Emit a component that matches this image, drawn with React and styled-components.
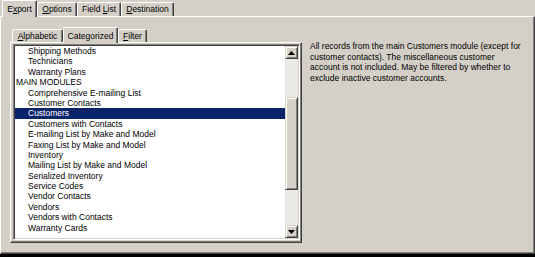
import React from "react";
import styled, { createGlobalStyle } from "styled-components";

const GlobalStyle = createGlobalStyle`
  html, body { margin: 0; padding: 0; background: #d4d0c8; }
`;

const face = "#d4d0c8";
const shadow = "#808080";
const dark = "#404040";

const items = [
  { label: "Shipping Methods" },
  { label: "Technicians" },
  { label: "Warranty Plans" },
  { label: "MAIN MODULES", header: true },
  { label: "Comprehensive E-mailing List" },
  { label: "Customer Contacts" },
  { label: "Customers", selected: true },
  { label: "Customers with Contacts" },
  { label: "E-mailing List by Make and Model" },
  { label: "Faxing List by Make and Model" },
  { label: "Inventory" },
  { label: "Mailing List by Make and Model" },
  { label: "Serialized Inventory" },
  { label: "Service Codes" },
  { label: "Vendor Contacts" },
  { label: "Vendors" },
  { label: "Vendors with Contacts" },
  { label: "Warranty Cards" },
];

const App = () => {
  return (
    <>
      <GlobalStyle />
      <Window>
        <TabStrip $h={16} $pl={2}>
          <Tab $w={35} $h={14} $active>
            E<u>x</u>port
          </Tab>
          <Tab $w={40} $h={14}>
            <u>O</u>ptions
          </Tab>
          <Tab $w={44} $h={14}>
            Field <u>L</u>ist
          </Tab>
          <Tab $w={53} $h={14}>
            <u>D</u>estination
          </Tab>
        </TabStrip>
        <OuterPanel>
          <InnerControl>
            <TabStrip $h={15} $pl={2}>
              <Tab $w={51} $h={13}>
                <u>A</u>lphabetic
              </Tab>
              <Tab $w={55} $h={13} $active>
                Categorized
              </Tab>
              <Tab $w={29} $h={13}>
                <u>F</u>ilter
              </Tab>
            </TabStrip>
            <InnerPanel>
              <ListBox>
                <List>
                  {items.map((it) => (
                    <Row key={it.label} $header={it.header} $selected={it.selected}>
                      {it.label}
                    </Row>
                  ))}
                </List>
                <ScrollBar>
                  <ArrowButton>
                    <svg width="7" height="4" viewBox="0 0 7 4">
                      <polygon points="3.5,0 7,4 0,4" fill="#000" />
                    </svg>
                  </ArrowButton>
                  <Track>
                    <Thumb style={{ marginTop: 38, height: 93 }} />
                  </Track>
                  <ArrowButton>
                    <svg width="7" height="4" viewBox="0 0 7 4">
                      <polygon points="0,0 7,0 3.5,4" fill="#000" />
                    </svg>
                  </ArrowButton>
                </ScrollBar>
              </ListBox>
            </InnerPanel>
          </InnerControl>
          <Description>
            All records from the main Customers module (except for customer
            contacts). The miscellaneous customer account is not included. May
            be filtered by whether to exclude inactive customer accounts.
          </Description>
        </OuterPanel>
        <Footer />
      </Window>
    </>
  );
};

export default App;

const Window = styled.div`
  width: 535px;
  height: 257px;
  display: flex;
  flex-direction: column;
  background: ${face};
  font-family: "Liberation Sans", Arial, sans-serif;
  font-size: 8.5px;
  color: #000;
  overflow: hidden;
`;

const TabStrip = styled.div`
  display: flex;
  align-items: flex-end;
  height: ${(p) => p.$h}px;
  padding-left: ${(p) => p.$pl}px;
  position: relative;
  z-index: 2;
  flex-shrink: 0;
`;

const Tab = styled.div`
  box-sizing: border-box;
  width: ${(p) => p.$w}px;
  height: ${(p) => (p.$active ? p.$h + 3 : p.$h)}px;
  margin-bottom: ${(p) => (p.$active ? -1 : 0)}px;
  padding-top: ${(p) => (p.$active ? 3 : 1)}px;
  background: ${face};
  border-left: 1px solid #fff;
  border-top: 1px solid #fff;
  border-right: 1px solid ${dark};
  border-top-left-radius: 2px;
  border-top-right-radius: 2px;
  box-shadow: inset -1px 0 ${shadow};
  text-align: center;
  white-space: nowrap;
  line-height: 10px;

  u {
    text-decoration-thickness: 1px;
    text-underline-offset: 1px;
  }
`;

const OuterPanel = styled.div`
  flex: 1;
  min-height: 0;
  display: flex;
  align-items: flex-start;
  box-sizing: border-box;
  padding: 10px 0 0 9px;
  border-top: 1px solid #fff;
  border-left: 1px solid #fff;
  border-right: 1px solid ${dark};
  border-bottom: 1px solid ${dark};
  box-shadow: inset -1px -1px ${shadow};
  position: relative;
  z-index: 1;
`;

const InnerControl = styled.div`
  width: 292px;
  height: 216px;
  display: flex;
  flex-direction: column;
  flex-shrink: 0;
`;

const InnerPanel = styled.div`
  flex: 1;
  min-height: 0;
  display: flex;
  box-sizing: border-box;
  padding: 1px 1px 2px 2px;
  border-top: 1px solid #fff;
  border-left: 1px solid #fff;
  border-right: 1px solid ${dark};
  border-bottom: 1px solid ${dark};
  box-shadow: inset -1px -1px ${shadow};
  position: relative;
  z-index: 1;
`;

const ListBox = styled.div`
  flex: 1;
  min-height: 0;
  display: flex;
  box-sizing: border-box;
  padding: 1px;
  border-top: 1px solid ${shadow};
  border-left: 1px solid ${shadow};
  border-right: 1px solid #fff;
  border-bottom: 1px solid #fff;
  box-shadow: inset 1px 1px ${dark}, inset -1px -1px ${face};
  background: #fff;
  overflow: hidden;
`;

const List = styled.div`
  flex: 1;
  min-height: 0;
  overflow: hidden;
`;

const Row = styled.div`
  height: 10.4px;
  line-height: 10.4px;
  padding-left: ${(p) => (p.$header ? 1 : 13)}px;
  white-space: nowrap;
  background: ${(p) => (p.$selected ? "#0a246a" : "transparent")};
  color: ${(p) => (p.$selected ? "#fff" : "#000")};
`;

const ScrollBar = styled.div`
  width: 13px;
  display: flex;
  flex-direction: column;
  flex-shrink: 0;
`;

const Raised = styled.div`
  box-sizing: border-box;
  background: ${face};
  border-top: 1px solid ${face};
  border-left: 1px solid ${face};
  border-right: 1px solid ${dark};
  border-bottom: 1px solid ${dark};
  box-shadow: inset 1px 1px #fff, inset -1px -1px ${shadow};
`;

const ArrowButton = styled(Raised)`
  height: 13px;
  display: flex;
  align-items: center;
  justify-content: center;
  flex-shrink: 0;
`;

const Track = styled.div`
  flex: 1;
  min-height: 0;
  background: #ebe9e4;
  display: flex;
  flex-direction: column;
`;

const Thumb = styled(Raised)`
  width: 13px;
  flex-shrink: 0;
`;

const Description = styled.div`
  width: 215px;
  padding: 14px 0 0 8px;
  line-height: 10.5px;
`;

const Footer = styled.div`
  height: 3px;
  background: #000;
  flex-shrink: 0;
`;
